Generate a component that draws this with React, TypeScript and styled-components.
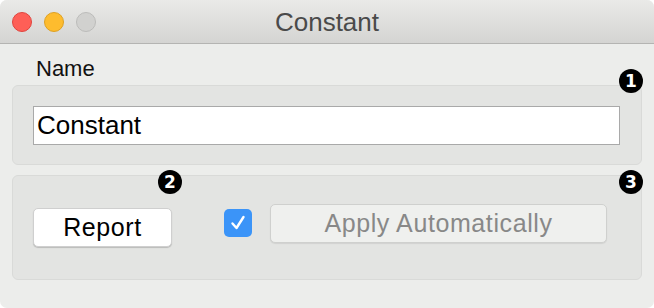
import React from 'react';
import styled, { createGlobalStyle } from 'styled-components';

const GlobalStyle = createGlobalStyle`
  html, body {
    margin: 0;
    padding: 0;
    background: #ffffff;
  }
  * {
    box-sizing: border-box;
  }
`;

const Window = styled.div`
  width: 654px;
  height: 308px;
  border-radius: 7px;
  overflow: hidden;
  background: #ecedeb;
  font-family: "Liberation Sans", Arial, sans-serif;
  display: flex;
  flex-direction: column;
`;

const TitleBar = styled.div`
  height: 44px;
  flex-shrink: 0;
  position: relative;
  display: flex;
  align-items: center;
  justify-content: center;
  background: linear-gradient(#eaeae8, #d4d4d2);
  border-bottom: 1px solid #b4b4b2;
`;

const Lights = styled.div`
  position: absolute;
  left: 12px;
  top: 12px;
  display: flex;
  gap: 12px;
`;

const Light = styled.span<{ $fill: string; $edge: string }>`
  width: 20px;
  height: 20px;
  border-radius: 50%;
  background: ${p => p.$fill};
  border: 1px solid ${p => p.$edge};
`;

const Title = styled.div`
  font-size: 26px;
  color: #4a4a4a;
  margin-top: 1px;
`;

const Body = styled.div`
  padding: 12px 12px 0 12px;
  display: flex;
  flex-direction: column;
`;

const Label = styled.div`
  font-size: 22px;
  line-height: 25px;
  color: #111;
  padding-left: 24px;
  height: 29px;
`;

const Group = styled.div<{ $height: number }>`
  position: relative;
  height: ${p => p.$height}px;
  background: #e3e4e2;
  border: 1px solid #d9dad8;
  border-radius: 6px;
`;

const NameGroup = styled(Group)`
  padding: 20px 21px 0 20px;
`;

const ControlsGroup = styled(Group)`
  margin-top: 10px;
  padding: 28px 33px 0 20px;
  display: flex;
  align-items: flex-start;
`;

const TextField = styled.input`
  width: 100%;
  height: 39px;
  border: 1px solid #a9a9a9;
  background: #fff;
  font-family: "Liberation Sans", Arial, sans-serif;
  font-size: 26px;
  color: #000;
  padding: 0 3px;
  outline: none;
`;

const PushButton = styled.button`
  width: 139px;
  height: 39px;
  margin-top: 4px;
  background: #fff;
  border: 1px solid #cfcfcf;
  border-radius: 5px;
  box-shadow: 0 1px 1px rgba(0, 0, 0, 0.18);
  font-family: "Liberation Sans", Arial, sans-serif;
  font-size: 25px;
  letter-spacing: 0.6px;
  color: #000;
  padding: 0;
`;

const Check = styled.span`
  width: 28px;
  height: 28px;
  margin: 5px 0 0 52px;
  border-radius: 5px;
  background: #3b94f8;
  display: flex;
  align-items: center;
  justify-content: center;
`;

const ApplyButton = styled.button`
  margin-left: 18px;
  width: 337px;
  height: 39px;
  background: #eff0ee;
  border: 1px solid #cfd0ce;
  border-radius: 5px;
  box-shadow: 0 1px 1px rgba(0, 0, 0, 0.08);
  font-family: "Liberation Sans", Arial, sans-serif;
  font-size: 25px;
  letter-spacing: 0.6px;
  color: #888888;
  padding: 0;
`;

const Badge = styled.span<{ $left?: number; $right?: number; $top: number }>`
  position: absolute;
  top: ${p => p.$top}px;
  ${p => (p.$left !== undefined ? `left: ${p.$left}px;` : '')}
  ${p => (p.$right !== undefined ? `right: ${p.$right}px;` : '')}
  width: 24px;
  height: 24px;
  border-radius: 50%;
  background: #000;
  color: #fff;
  font-family: "DejaVu Sans", sans-serif;
  font-weight: bold;
  font-size: 17px;
  line-height: 24px;
  text-align: center;
`;

const App: React.FC = () => {
  return (
    <>
      <GlobalStyle />
      <Window>
        <TitleBar>
          <Lights>
            <Light $fill="#fe5f57" $edge="#e0443e" />
            <Light $fill="#febc2e" $edge="#dea123" />
            <Light $fill="#d1d1cf" $edge="#bcbcba" />
          </Lights>
          <Title>Constant</Title>
        </TitleBar>
        <Body>
          <Label>Name</Label>
          <NameGroup $height={80}>
            <TextField defaultValue="Constant" />
            <Badge $right={-2} $top={-17}>1</Badge>
          </NameGroup>
          <ControlsGroup $height={105}>
            <Badge $left={145} $top={-6}>2</Badge>
            <Badge $right={-2} $top={-6}>3</Badge>
            <PushButton>Report</PushButton>
            <Check>
              <svg width="18" height="18" viewBox="0 0 18 18">
                <path d="M3.5 9.5 L7.5 14 L14.5 3" fill="none" stroke="#fff" strokeWidth="2.4" strokeLinecap="round" strokeLinejoin="round" />
              </svg>
            </Check>
            <ApplyButton disabled>Apply Automatically</ApplyButton>
          </ControlsGroup>
        </Body>
      </Window>
    </>
  );
};

export default App;
